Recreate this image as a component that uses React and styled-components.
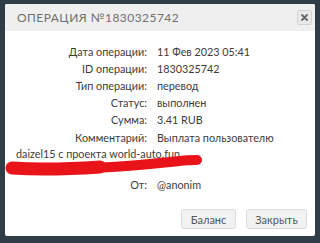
import React from "react";
import styled, { createGlobalStyle } from "styled-components";

const Global = createGlobalStyle`
  html, body { margin: 0; padding: 0; background: #2f3d47; }
  body { width: 320px; height: 243px; overflow: hidden; font-family: Lato, "Liberation Sans", sans-serif; }
`;

const Page = styled.div`
  padding: 4px 5px 7px 5px;
`;

const Modal = styled.div`
  position: relative;
  width: 310px;
  height: 232px;
  background: #ffffff;
  border-radius: 2px;
  display: flex;
  flex-direction: column;
  overflow: hidden;
`;

const Header = styled.div`
  height: 27px;
  background: #efefef;
  display: flex;
  align-items: center;
  justify-content: space-between;
  padding: 0 3px 0 12px;
`;

const Title = styled.div`
  font-size: 12px;
  letter-spacing: 0.45px;
  color: #707070;
  text-transform: uppercase;
`;

const CloseBtn = styled.div`
  width: 13px;
  height: 13px;
  border: 1px solid #d4d4d4;
  border-radius: 2px;
  background: #e9e9e9;
  display: flex;
  align-items: center;
  justify-content: center;
`;

const Body = styled.div`
  padding: 11.5px 8px 0 11px;
  font-size: 10.8px;
  line-height: 17.2px;
  color: #3c3c3c;
  flex: 1;
`;

const Row = styled.div`
  margin-top: ${(p) => (p.$gap ? "14.5px" : "0")};
`;

const Label = styled.span`
  display: inline-block;
  width: 131px;
  margin-right: 10px;
  text-align: right;
`;

const Continuation = styled.div`
  white-space: nowrap;
  margin-top: -1px;
`;

const Footer = styled.div`
  display: flex;
  justify-content: flex-end;
  gap: 10px;
  padding: 0 8px 7px 0;
`;

const Button = styled.div`
  width: ${(p) => p.$w}px;
  height: 20px;
  box-sizing: border-box;
  border: 1px solid #dcdcdc;
  border-radius: 3px;
  background: #f2f2f2;
  color: #555;
  font-size: 11px;
  display: flex;
  align-items: center;
  justify-content: center;
`;

const Scribble = styled.svg`
  position: absolute;
  left: -5px;
  top: -4px;
  pointer-events: none;
`;

const rows = [
  ["Дата операции:", "11 Фев 2023 05:41"],
  ["ID операции:", "1830325742"],
  ["Тип операции:", "перевод"],
  ["Статус:", "выполнен"],
  ["Сумма:", "3.41 RUB"],
  ["Комментарий:", "Выплата пользователю"],
];

export default function App() {
  return (
    <>
      <Global />
      <Page>
        <Modal>
          <Header>
            <Title>Операция №1830325742</Title>
            <CloseBtn>
              <svg width="7" height="7" viewBox="0 0 7 7">
                <path d="M1 1L6 6M6 1L1 6" stroke="#666" strokeWidth="1.8" strokeLinecap="round" />
              </svg>
            </CloseBtn>
          </Header>
          <Body>
            {rows.map(([l, v]) => (
              <Row key={l}>
                <Label>{l}</Label>
                {v}
              </Row>
            ))}
            <Continuation>daizel15 с проекта world-auto.fun</Continuation>
            <Row $gap>
              <Label>От:</Label>@anonim
            </Row>
          </Body>
          <Footer>
            <Button $w={55}>Баланс</Button>
            <Button $w={61}>Закрыть</Button>
          </Footer>
          <Scribble width="320" height="243" viewBox="0 0 320 243">
            <path d="M12 168 C 50 171, 110 168, 150 164 S 185 160, 197 160" stroke="#e8141a" strokeWidth="10" strokeLinecap="round" fill="none" />
            <path d="M12 168 C 40 170, 70 169, 100 167" stroke="#e8141a" strokeWidth="13" strokeLinecap="round" fill="none" />
          </Scribble>
        </Modal>
      </Page>
    </>
  );
}
